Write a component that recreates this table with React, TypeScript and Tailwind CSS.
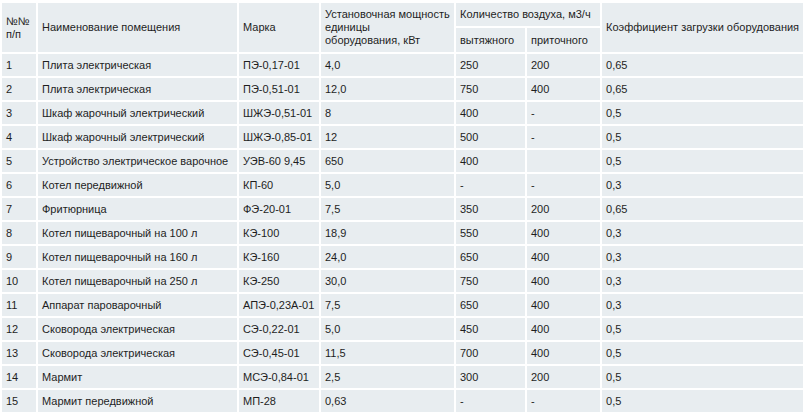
import React from "react";

const rows: string[][] = [
  ["1", "Плита электрическая", "ПЭ-0,17-01", "4,0", "250", "200", "0,65"],
  ["2", "Плита электрическая", "ПЭ-0,51-01", "12,0", "750", "400", "0,65"],
  ["3", "Шкаф жарочный электрический", "ШЖЭ-0,51-01", "8", "400", "-", "0,5"],
  ["4", "Шкаф жарочный электрический", "ШЖЭ-0,85-01", "12", "500", "-", "0,5"],
  ["5", "Устройство электрическое варочное", "УЭВ-60 9,45", "650", "400", "", "0,5"],
  ["6", "Котел передвижной", "КП-60", "5,0", "-", "-", "0,3"],
  ["7", "Фритюрница", "ФЭ-20-01", "7,5", "350", "200", "0,65"],
  ["8", "Котел пищеварочный на 100 л", "КЭ-100", "18,9", "550", "400", "0,3"],
  ["9", "Котел пищеварочный на 160 л", "КЭ-160", "24,0", "650", "400", "0,3"],
  ["10", "Котел пищеварочный на 250 л", "КЭ-250", "30,0", "750", "400", "0,3"],
  ["11", "Аппарат пароварочный", "АПЭ-0,23А-01", "7,5", "650", "400", "0,3"],
  ["12", "Сковорода электрическая", "СЭ-0,22-01", "5,0", "450", "400", "0,5"],
  ["13", "Сковорода электрическая", "СЭ-0,45-01", "11,5", "700", "400", "0,5"],
  ["14", "Мармит", "МСЭ-0,84-01", "2,5", "300", "200", "0,5"],
  ["15", "Мармит передвижной", "МП-28", "0,63", "-", "-", "0,5"],
];

const th = "bg-[#e8edf0] px-[4px] py-0 text-left align-middle font-normal leading-[13px]";
const td = "bg-[#e8edf0] px-[4px] py-0 h-[22px] align-middle whitespace-nowrap";

export default function App() {
  return (
    <div className="bg-white w-[810px] h-[417px] pt-[1px] text-[11px] text-[#1e1e1e] [font-family:'Liberation_Sans',Arial,sans-serif]">
      <table className="table-fixed w-[805px] border-separate border-spacing-[2px]">
        <colgroup>
          <col className="w-[34px]" />
          <col className="w-[199px]" />
          <col className="w-[80px]" />
          <col className="w-[133px]" />
          <col className="w-[69px]" />
          <col className="w-[73px]" />
          <col className="w-[201px]" />
        </colgroup>
        <thead>
          <tr className="h-[23px]">
            <th rowSpan={2} className={th}>
              №№
              <br />
              п/п
            </th>
            <th rowSpan={2} className={th}>
              Наименование помещения
            </th>
            <th rowSpan={2} className={th}>
              Марка
            </th>
            <th rowSpan={2} className={th + " whitespace-nowrap"}>
              Установочная мощность
              <br />
              единицы
              <br />
              оборудования, кВт
            </th>
            <th colSpan={2} className={th + " h-[23px] whitespace-nowrap"}>
              Количество воздуха, м3/ч
            </th>
            <th rowSpan={2} className={th + " whitespace-nowrap"}>
              Коэффициент загрузки оборудования
            </th>
          </tr>
          <tr className="h-[24px]">
            <th className={th + " h-[24px]"}>вытяжного</th>
            <th className={th + " h-[24px]"}>приточного</th>
          </tr>
        </thead>
        <tbody>
          {rows.map((r, i) => (
            <tr key={i}>
              {r.map((c, j) => (
                <td key={j} className={td}>
                  {c}
                </td>
              ))}
            </tr>
          ))}
        </tbody>
      </table>
    </div>
  );
}
